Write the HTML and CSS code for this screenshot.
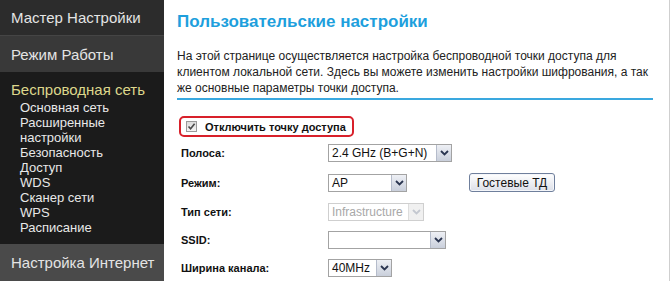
FILE: index.html
```html
<!DOCTYPE html>
<html lang="ru">
<head>
<meta charset="utf-8">
<link rel="stylesheet" href="styles.css">
</head>
<body>
<div class="page">
  <nav class="sidebar">
    <div class="nav-item nav-first">Мастер Настройки</div>
    <div class="nav-item nav-second">Режим Работы</div>
    <div class="nav-section">
      <div class="nav-title">Беспроводная сеть</div>
      <ul class="sub">
        <li>Основная сеть</li>
        <li>Расширенные</li>
        <li>настройки</li>
        <li>Безопасность</li>
        <li>Доступ</li>
        <li>WDS</li>
        <li>Сканер сети</li>
        <li>WPS</li>
        <li>Расписание</li>
      </ul>
    </div>
    <div class="nav-item nav-last">Настройка Интернет</div>
  </nav>
  <main class="main">
    <h1 class="title">Пользовательские настройки</h1>
    <p class="desc">На этой странице осуществляется настройка беспроводной точки доступа для<br>клиентом локальной сети. Здесь вы можете изменить настройки шифрования, а так<br>же основные параметры точки доступа.</p>
    <div class="rule"></div>
    <label class="check-box">
      <span class="check"><svg width="9" height="9" viewBox="0 0 9 9"><path d="M1.5 4.5 L3.6 6.8 L7.6 1.8" fill="none" stroke="#4a4a4a" stroke-width="1.6"/></svg></span>
      <span class="check-label">Отключить точку доступа</span>
    </label>
    <div class="form">
      <div class="row">
        <span class="label">Полоса:</span>
        <div class="select w-band"><span class="val">2.4 GHz (B+G+N)</span><span class="arrow"><svg width="9" height="6" viewBox="0 0 9 6"><path d="M1 1 L4.5 4.5 L8 1" fill="none" stroke="#2a3550" stroke-width="1.8"/></svg></span></div>
      </div>
      <div class="row row-tall">
        <span class="label">Режим:</span>
        <div class="select w-mode"><span class="val">AP</span><span class="arrow"><svg width="9" height="6" viewBox="0 0 9 6"><path d="M1 1 L4.5 4.5 L8 1" fill="none" stroke="#2a3550" stroke-width="1.8"/></svg></span></div>
        <button class="btn">Гостевые ТД</button>
      </div>
      <div class="row">
        <span class="label">Тип сети:</span>
        <div class="select w-type disabled"><span class="val">Infrastructure</span><span class="arrow"><svg width="9" height="6" viewBox="0 0 9 6"><path d="M1 1 L4.5 4.5 L8 1" fill="none" stroke="#c4c8d0" stroke-width="1.8"/></svg></span></div>
      </div>
      <div class="row">
        <span class="label">SSID:</span>
        <div class="select w-ssid"><span class="val"></span><span class="arrow"><svg width="9" height="6" viewBox="0 0 9 6"><path d="M1 1 L4.5 4.5 L8 1" fill="none" stroke="#2a3550" stroke-width="1.8"/></svg></span></div>
      </div>
      <div class="row">
        <span class="label">Ширина канала:</span>
        <div class="select w-width"><span class="val">40MHz</span><span class="arrow"><svg width="9" height="6" viewBox="0 0 9 6"><path d="M1 1 L4.5 4.5 L8 1" fill="none" stroke="#2a3550" stroke-width="1.8"/></svg></span></div>
      </div>
    </div>
  </main>
</div>
</body>
</html>
```

FILE: styles.css
```css
* { box-sizing: border-box; }
html, body { margin: 0; padding: 0; background: #fff; }
body { font-family: "Liberation Sans", Arial, sans-serif; width: 671px; height: 281px; overflow: hidden; }

.page { display: flex; height: 281px; }

.sidebar { width: 164px; flex: none; display: flex; flex-direction: column; background: #1c1c1c; }
.nav-item { font-size: 15px; color: #e4e4e4; padding-left: 11px; display: flex; align-items: center; }
.nav-first { height: 36px; background: #2c2c2c; border-bottom: 1px solid #454545; }
.nav-second { height: 36px; background: #393939; }
.nav-section { background: #1b1b1b; padding: 9px 0 8px 0; height: 172px; }
.nav-title { font-size: 15px; line-height: 18px; color: #ddd78c; padding-left: 11px; }
.sub { list-style: none; margin: 0; padding: 1px 0 0 20px; }
.sub li { font-size: 13px; line-height: 15px; color: #e8e8e8; }
.nav-last { flex: 1; background: #4a4a4a; }

.main { width: 506px; flex: none; border-right: 1px solid #cfcfcf; padding: 12px 16px 0 13px; }
.title { margin: 0; font-size: 17px; line-height: 20px; font-weight: bold; color: #1e9fdd; }
.desc { margin: 16px 0 0 0; font-size: 12px; line-height: 16px; color: #222; white-space: nowrap; }
.rule { height: 2px; background: #3aa8df; margin-top: 2px; }

.check-box { display: flex; align-items: center; width: 175px; height: 21px; margin: 16px 0 0 2px; border: 2px solid #d8202a; border-radius: 5px; padding-left: 5px; }
.check { width: 11px; height: 11px; border: 1px solid #9a9a9a; background: linear-gradient(#dcdcdc, #f4f4f4); display: flex; align-items: center; justify-content: center; }
.check-label { margin-left: 8px; font-size: 11px; font-weight: bold; color: #111; }

.form { display: flex; flex-direction: column; gap: 10px; margin-top: 7px; padding-left: 4px; }
.row { display: flex; align-items: center; height: 18px; }
.row-tall { height: 21px; }
.label { width: 147px; flex: none; font-size: 11px; font-weight: bold; color: #111; }

.select { display: flex; height: 18px; border: 1px solid #a3a3a3; background: #fff; align-items: stretch; }
.val { flex: 1; font-size: 12px; line-height: 16px; padding-left: 3px; color: #111; white-space: nowrap; overflow: hidden; }
.arrow { width: 15px; flex: none; border-left: 1px solid #b5bccb; background: linear-gradient(#eef0f5, #c9cfdb); display: flex; align-items: center; justify-content: center; }
.w-band { width: 124px; }
.w-mode { width: 79px; }
.w-type { width: 96px; }
.w-ssid { width: 118px; }
.w-width { width: 64px; }
.disabled { border-color: #cfcfcf; }
.disabled .val { color: #a8a8a8; }
.disabled .arrow { background: #f0f0f0; border-left-color: #ddd; }

.btn { margin-left: 62px; height: 19px; width: 86px; padding: 0; font-family: "Liberation Sans", Arial, sans-serif; font-size: 12px; color: #111; border: 1px solid #6f7f9c; border-radius: 3px; background: linear-gradient(#ffffff, #dcdfe8); box-shadow: inset 0 0 0 1px #f4f6fa; }
```
